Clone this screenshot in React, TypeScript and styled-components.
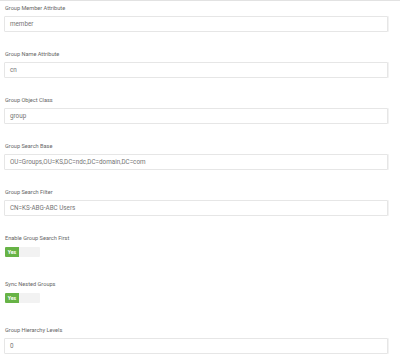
import * as React from 'react';
import styled, { createGlobalStyle } from 'styled-components';

const GlobalStyle = createGlobalStyle`
  html, body {
    margin: 0;
    padding: 0;
    background: #ffffff;
  }
  body {
    font-family: Roboto, "Noto Sans", Arial, sans-serif;
  }
`;

const Page = styled.div`
  width: 400px;
  height: 358px;
  overflow: hidden;
  border-top: 1px solid #e2e2e2;
  box-sizing: border-box;
  padding: 3px 12px 0 4px;
  display: flex;
  flex-direction: column;
  gap: 18px;
`;

const Field = styled.div`
  display: flex;
  flex-direction: column;
  gap: 4px;
`;

const Label = styled.label`
  font-size: 5.6px;
  line-height: 8px;
  color: #666666;
  padding-left: 1px;
`;

const Input = styled.div`
  height: 16px;
  box-sizing: border-box;
  border: 1px solid #e6e6e6;
  border-radius: 1px;
  padding: 0 5px;
  display: flex;
  align-items: center;
  font-size: 6.3px;
  color: #757575;
  background: #fff;
  box-shadow: 1px 0 0 #f2f2f2;
`;

const ToggleWrap = styled.div`
  display: flex;
  width: 35px;
  height: 10px;
  margin: 1px 0 5px 1px;
`;

const ToggleOn = styled.div`
  width: 14px;
  background: #67b346;
  color: #ffffff;
  font-size: 5.2px;
  font-weight: 700;
  display: flex;
  align-items: center;
  justify-content: center;
  border-radius: 1px 0 0 1px;
`;

const ToggleOff = styled.div`
  flex: 1;
  background: #f2f2f2;
  border-radius: 0 1px 1px 0;
`;

const textFields = [
  { label: 'Group Member Attribute', value: 'member' },
  { label: 'Group Name Attribute', value: 'cn' },
  { label: 'Group Object Class', value: 'group' },
  { label: 'Group Search Base', value: 'OU=Groups,OU=KS,DC=ndc,DC=domain,DC=com' },
  { label: 'Group Search Filter', value: 'CN=KS-ABG-ABC Users' },
];

export default function App() {
  return (
    <>
      <GlobalStyle />
      <Page>
        {textFields.map(f => (
          <Field key={f.label}>
            <Label>{f.label}</Label>
            <Input>{f.value}</Input>
          </Field>
        ))}
        <Field>
          <Label>Enable Group Search First</Label>
          <ToggleWrap>
            <ToggleOn>Yes</ToggleOn>
            <ToggleOff />
          </ToggleWrap>
        </Field>
        <Field>
          <Label>Sync Nested Groups</Label>
          <ToggleWrap>
            <ToggleOn>Yes</ToggleOn>
            <ToggleOff />
          </ToggleWrap>
        </Field>
        <Field>
          <Label>Group Hierarchy Levels</Label>
          <Input>0</Input>
        </Field>
      </Page>
    </>
  );
}
